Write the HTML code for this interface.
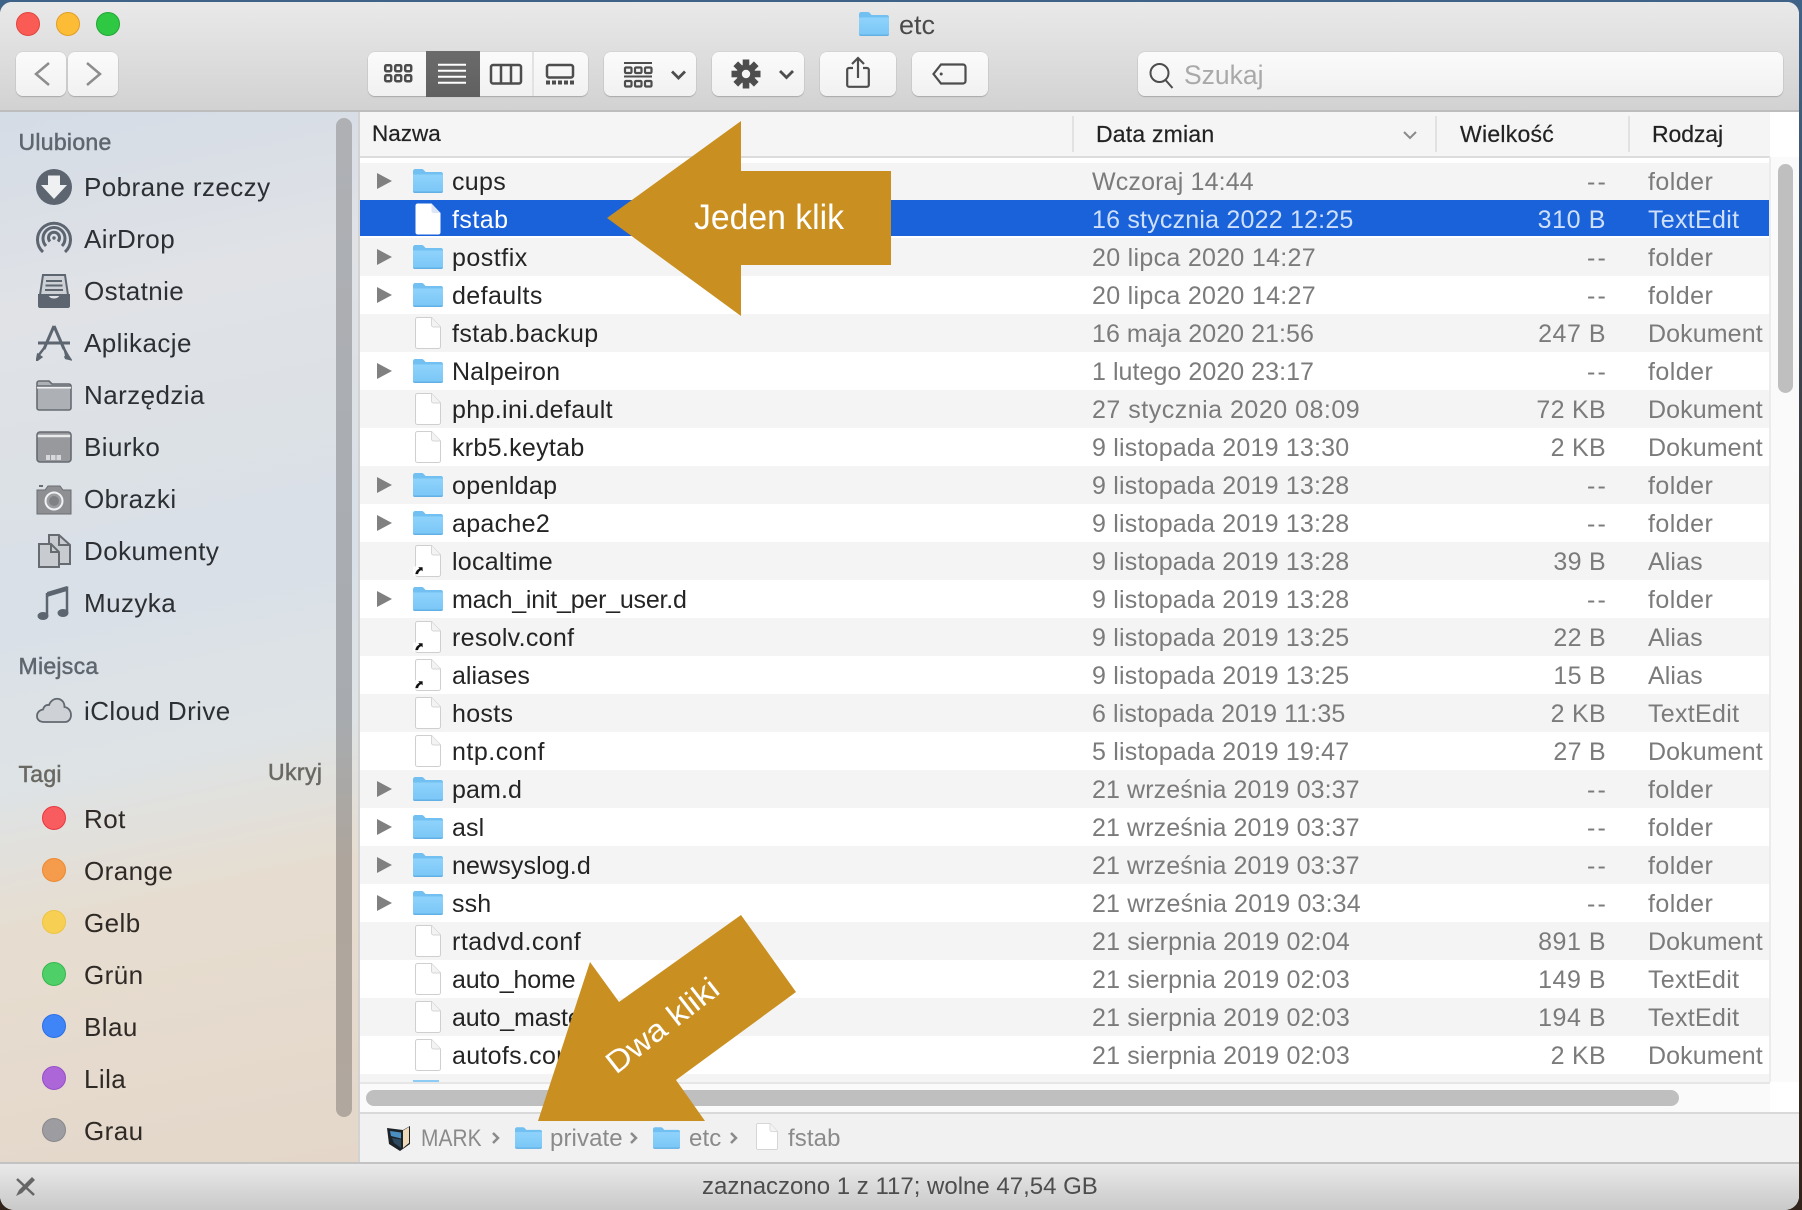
<!DOCTYPE html>
<html lang="pl"><head><meta charset="utf-8"><title>etc</title>
<style>
*{box-sizing:border-box;margin:0;padding:0}
html,body{width:1802px;height:1210px;overflow:hidden}
body{position:relative;background:linear-gradient(#3f6288 0,#3f5d7c 8%,#3a2d25 50%,#33241b 100%);font-family:"Liberation Sans",sans-serif}
.win{position:absolute;left:0;top:2px;width:1799px;height:1208px;border-radius:12px 12px 14px 14px;overflow:hidden;background:#fff}
.abs,.win>*{position:absolute}
.top{position:absolute;left:0;top:0;width:1799px;height:110px;background:linear-gradient(#e9e9e9,#d2d2d2);border-bottom:2px solid #bdbdbd}
.page{position:absolute;left:0;top:0;width:1802px;height:1210px}
.page>*{position:absolute}
.light{width:24px;height:24px;border-radius:50%;top:12px}
.btn{background:linear-gradient(#fbfbfb,#f1f1f1);border-radius:7px;box-shadow:0 1px 1px #a8a8a8,0 0 0 .5px #c9c9c9;height:44px;top:52px}
.side{left:0;top:112px;width:358px;height:1050px;background:linear-gradient(168deg,#d4dce6 0,#e0e2e6 18%,#d9e0e7 45%,#dee3e6 60%,#e6ddd0 73%,#e4d7ca 100%)}
.sbl{left:358px;top:112px;width:2px;height:1050px;background:#d3d3d3}
.sec{font-size:23px;left:18.500px;color:#5f666e;-webkit-text-stroke:.5px #5f666e;letter-spacing:.28px;line-height:28px;white-space:nowrap}
.it{left:84px;font-size:26px;line-height:32px;color:#2c2f33;letter-spacing:.42px;white-space:nowrap}
.it.w{color:#2f2a26}
.ic{left:36px;width:36px;height:36px}
.dot{left:42px;width:24px;height:24px;border-radius:50%;border-width:1.5px;border-style:solid}
.hd{left:360px;top:112px;width:1410px;height:45px;background:#f5f5f5}
.hl{left:360px;top:156px;width:1410px;height:2px;background:#dcdcdc}
.ht{top:120px;font-size:23px;line-height:28px;color:#222;white-space:nowrap;-webkit-text-stroke:.2px #222}
.cd{top:116px;width:2px;height:36px;background:#e2e2e2}
.r{left:360px;width:1409px;height:38px;line-height:37px;font-size:25px;white-space:nowrap;overflow:hidden}
.g{background:#f4f4f4}
.r span{position:absolute;top:2px}
.n{left:92px;color:#242424;letter-spacing:.3px}
.d{left:732px;color:#7b7b7b;letter-spacing:.2px}
.d1{letter-spacing:.05px}
.d2{letter-spacing:.5px}
.d3{letter-spacing:.1px}
.s{right:163px;color:#7b7b7b;letter-spacing:.3px}
.s.m{letter-spacing:2.200px;right:161px}
.k{left:1288px;color:#7b7b7b;letter-spacing:.45px}
.k.x{letter-spacing:.1px}
.k.t{letter-spacing:.3px}
.sel{background:#1a62d9;height:36px}
.sel .n{color:#fff}
.sel .d,.sel .s,.sel .k{color:#cfe0fa}
.r svg{position:absolute;overflow:visible}
.tw{left:17px;top:11px;width:15px;height:16px}
.fo{left:53px;top:7px;width:30px;height:24px}
.fi{left:55px;top:3px;width:26px;height:32px}
.pb{font-size:24px;line-height:30px;color:#8a8a8a;top:1124px;white-space:nowrap;letter-spacing:.1px}
</style></head>
<body>
<svg width="0" height="0" style="position:absolute">
<defs>
<linearGradient id="fg" x1="0" y1="0" x2="0" y2="1"><stop offset="0" stop-color="#8fd3fc"/><stop offset="1" stop-color="#79c6f6"/></linearGradient>
<symbol id="folder" viewBox="0 0 30 24"><path d="M0 2.2C0 1 1 0 2.2 0h6.6c1 0 1.600.5 2.200 1.200L12.600 3H28c1.100 0 2 .9 2 2v17c0 1.100-.9 2-2 2H2c-1.100 0-2-.9-2-2z" fill="#72c0f2"/><path d="M0 5.500h30v16.500c0 1.100-.9 2-2 2H2c-1.100 0-2-.9-2-2z" fill="url(#fg)"/><path d="M0 22.500h30c0 .9-.9 1.500-2 1.500H2c-1.100 0-2-.6-2-1.500z" fill="#62b0e4"/></symbol>
<symbol id="file" viewBox="0 0 26 32"><path d="M2.500.5h14L25.500 10v19.500c0 1.100-.9 2-2 2h-21c-1.100 0-2-.9-2-2v-27c0-1.100.9-2 2-2z" fill="#fff" stroke="#cfcfcf"/><path d="M16.500.5V8c0 1.100.9 2 2 2h7" fill="#f3f3f3" stroke="#d6d6d6"/></symbol>
<symbol id="filew" viewBox="0 0 26 32"><path d="M2.500.5h14L25.500 10v19.500c0 1.100-.9 2-2 2h-21c-1.100 0-2-.9-2-2v-27c0-1.100.9-2 2-2z" fill="#fff"/><path d="M16.500.5V8c0 1.100.9 2 2 2h7z" fill="#dce6f6"/></symbol>
<symbol id="tri" viewBox="0 0 15 16"><path d="M0 0L15 8L0 16z" fill="#808080"/></symbol>
<symbol id="alias" viewBox="0 0 12 12"><path d="M0 2h12v10H0z" fill="#fff" opacity=".85"/><path d="M2.500 10.500C3 7.500 4.500 5.500 7 4.500L5.800 3H10.500V7.500L9 6.200C7 7 6 8.500 5.500 10.500z" fill="#111"/></symbol>
</defs>
</svg>

<div class="win">
<div class="top"></div>
</div>

<div class="page">
<!-- traffic lights -->
<div class="light" style="left:16px;background:#fb5b55;border:1px solid #e0443e"></div>
<div class="light" style="left:56px;background:#fdbc35;border:1px solid #e09e25"></div>
<div class="light" style="left:96px;background:#2ec843;border:1px solid #22a636"></div>

<!-- title -->
<svg style="left:859px;top:12px" width="30" height="24"><use href="#folder"/></svg>
<div style="left:899px;top:9px;font-size:27px;line-height:32px;color:#4a4a4a">etc</div>

<!-- nav -->
<div class="btn" style="left:16px;width:50px"></div>
<div class="btn" style="left:68px;width:50px"></div>
<svg style="left:16px;top:52px" width="102" height="44" fill="none" stroke="#8d8d8d" stroke-width="2.500"><path d="M33 11L20 22L33 33"/><path d="M71 11L84 22L71 33"/></svg>

<!-- view segment -->
<div class="btn" style="left:368px;width:220px"></div>
<div style="left:426px;top:51px;width:54px;height:46px;background:linear-gradient(#6b6b6b,#606060)"></div>
<div style="left:532px;top:52px;width:2px;height:44px;background:#e2e2e2"></div>
<svg style="left:380px;top:60px" width="200" height="30">
<g fill="none" stroke="#4d4d4d" stroke-width="2.500">
<rect x="5.200" y="5.200" width="6" height="6" rx="1.300"/><rect x="15.200" y="5.200" width="6" height="6" rx="1.300"/><rect x="25.200" y="5.200" width="6" height="6" rx="1.300"/>
<rect x="5.200" y="15.200" width="6" height="6" rx="1.300"/><rect x="15.200" y="15.200" width="6" height="6" rx="1.300"/><rect x="25.200" y="15.200" width="6" height="6" rx="1.300"/>
<rect x="111" y="5" width="30" height="18.500" rx="2"/><path d="M121 5v18.500M131 5v18.500"/>
<rect x="167" y="5" width="26" height="12.500" rx="2"/>
</g>
<path d="M58 4.800h28M58 10.800h28M58 16.800h28M58 22.800h28" stroke="#fff" stroke-width="2"/>
<g fill="#4d4d4d"><rect x="166" y="20.500" width="4" height="4"/><rect x="172" y="20.500" width="4" height="4"/><rect x="178" y="20.500" width="4" height="4"/><rect x="184" y="20.500" width="4" height="4"/><rect x="190" y="20.500" width="4" height="4"/></g>
</svg>

<!-- group -->
<div class="btn" style="left:604px;width:92px"></div>
<svg style="left:620px;top:60px" width="72" height="30">
<path d="M4 3h28M4 16.500h28" stroke="#4d4d4d" stroke-width="2"/>
<g fill="none" stroke="#4d4d4d" stroke-width="2.200">
<rect x="5" y="7.500" width="6.500" height="5.500" rx="1"/><rect x="15" y="7.500" width="6.500" height="5.500" rx="1"/><rect x="25" y="7.500" width="6.500" height="5.500" rx="1"/>
<rect x="5" y="21" width="6.500" height="5.500" rx="1"/><rect x="15" y="21" width="6.500" height="5.500" rx="1"/><rect x="25" y="21" width="6.500" height="5.500" rx="1"/>
<path d="M52 11.500l6.500 6.500L65 11.500" stroke-width="2.800"/>
</g></svg>

<!-- gear -->
<div class="btn" style="left:712px;width:92px"></div>
<svg style="left:728px;top:56px" width="72" height="36">
<g transform="translate(18 18)" fill="#4d4d4d">
<circle r="9.500"/>
<g><rect x="-3.300" y="-14.500" width="6.600" height="6"/><rect x="-3.300" y="8.500" width="6.600" height="6"/><rect x="-14.500" y="-3.300" width="6" height="6.600"/><rect x="8.500" y="-3.300" width="6" height="6.600"/></g>
<g transform="rotate(45)"><rect x="-3.300" y="-14.500" width="6.600" height="6"/><rect x="-3.300" y="8.500" width="6.600" height="6"/><rect x="-14.500" y="-3.300" width="6" height="6.600"/><rect x="8.500" y="-3.300" width="6" height="6.600"/></g>
<circle r="4.200" fill="#f6f6f6"/>
</g>
<path d="M52 15l6.500 6.500L65 15" fill="none" stroke="#4d4d4d" stroke-width="2.800"/>
</svg>

<!-- share -->
<div class="btn" style="left:820px;width:76px"></div>
<svg style="left:840px;top:54px" width="36" height="36" fill="none" stroke="#4d4d4d" stroke-width="2.200">
<path d="M13 14H9c-1 0-1.800.8-1.800 1.800V31c0 1 .8 1.800 1.800 1.800h18c1 0 1.800-.8 1.800-1.800V15.800c0-1-.8-1.800-1.800-1.800h-4"/>
<path d="M18 24V4M12 10l6-6 6 6"/>
</svg>

<!-- tag -->
<div class="btn" style="left:912px;width:76px"></div>
<svg style="left:930px;top:60px" width="40" height="28" fill="none" stroke="#4d4d4d" stroke-width="2.200">
<path d="M11 4.500h22c1.400 0 2.500 1.100 2.500 2.500v14c0 1.400-1.100 2.500-2.500 2.500H11L3.500 14z"/>
<circle cx="11.200" cy="14" r="1.500" fill="#4d4d4d" stroke="none"/>
</svg>

<!-- search -->
<div class="btn" style="left:1138px;width:645px"></div>
<svg style="left:1148px;top:60px" width="28" height="30" fill="none" stroke="#4d4d4d" stroke-width="2"><circle cx="11.500" cy="13" r="9"/><path d="M17.500 20l7 8"/></svg>
<div style="left:1184px;top:59px;font-size:26.500px;line-height:32px;color:#a9a9a9">Szukaj</div>

<!-- sidebar -->
<div class="side"></div>
<div class="sbl"></div>
<div style="left:336px;top:118px;width:16px;height:999px;border-radius:8px;background:linear-gradient(#aeb0b4,#a7abaf 60%,#aea59c 75%,#b0a79e)"></div>

<div class="sec" style="top:128px">Ulubione</div>
<svg class="ic" style="top:169px" viewBox="0 0 36 36"><circle cx="18" cy="18" r="18" fill="#5c6570"/><path d="M12 6.500h12V16h7L18 30 5 16h7z" fill="#eef0f2"/></svg>
<div class="it" style="top:171px">Pobrane rzeczy</div>
<svg class="ic" style="top:221px" viewBox="0 0 36 36" fill="none" stroke="#5c6570" stroke-width="3"><path d="M7 31A16.500 16.500 0 1 1 29 31"/><path d="M10 25A11 11 0 1 1 26 25"/><path d="M14 20.500A5.500 5.500 0 1 1 22 20.500"/><circle cx="18" cy="17" r="1.700" fill="#5c6570" stroke="none"/></svg>
<div class="it" style="top:223px">AirDrop</div>
<svg class="ic" style="top:273px" viewBox="0 0 36 36"><path d="M7 2h22l3 20H4z" fill="#cdd1d6" stroke="#5c6570" stroke-width="2"/><path d="M10 8h16M9.500 12.500h17M9 17h18" stroke="#5c6570" stroke-width="2"/><path d="M2 21h10c.5 3 3 4.500 6 4.500s5.500-1.500 6-4.500h10v12c0 1-.8 2-2 2H4c-1.200 0-2-1-2-2z" fill="#5c6570"/></svg>
<div class="it" style="top:275px">Ostatnie</div>
<svg class="ic" style="top:325px" viewBox="0 0 36 36"><path d="M18 1L8 24" fill="none" stroke="#5c6570" stroke-width="3"/><path d="M18 1L28 24" fill="none" stroke="#5c6570" stroke-width="3"/><path d="M9 22L2 31M1 35l1-5 3 2zM27 22l5 9 2 3-4-1-1-2" fill="#5c6570" stroke="#5c6570" stroke-width="2.500"/><path d="M2 18h32" stroke="#5c6570" stroke-width="3"/></svg>
<div class="it" style="top:327px">Aplikacje</div>
<svg class="ic" style="top:377px" viewBox="0 0 36 36"><path d="M1 6c0-1 .8-2 2-2h10l3 3h17c1.200 0 2 1 2 2v22c0 1-.8 2-2 2H3c-1.200 0-2-1-2-2z" fill="#adb1b6" stroke="#666b72" stroke-width="1.600"/><path d="M1 10.500h34" stroke="#eef0f2" stroke-width="2"/><path d="M1 9h34" stroke="#666b72" stroke-width="1.400"/></svg>
<div class="it" style="top:379px">Narzędzia</div>
<svg class="ic" style="top:429px" viewBox="0 0 36 36"><rect x="1" y="3" width="34" height="30" rx="3" fill="#97999d" stroke="#666b72" stroke-width="1.600"/><path d="M1.800 7h32.400" stroke="#e8eaec" stroke-width="2.500"/><path d="M10 26h15v5H10z" fill="#d6d8db"/><path d="M14.500 26v5M20 26v5" stroke="#97999d"/></svg>
<div class="it" style="top:431px">Biurko</div>
<svg class="ic" style="top:481px" viewBox="0 0 36 36"><path d="M1 9h8l3-4h12l3 4h8v24H1z" fill="#8d8f93" stroke="#6a6d72"/><circle cx="18" cy="20" r="8.500" fill="#9b9da1" stroke="#f0f1f2" stroke-width="2"/><circle cx="18" cy="20" r="5" fill="#7f8185"/><path d="M3 5h4" stroke="#6a6d72" stroke-width="2"/></svg>
<div class="it" style="top:483px">Obrazki</div>
<svg class="ic" style="top:533px" viewBox="0 0 36 36" fill="#c8ccd1" stroke="#666b72" stroke-width="2"><path d="M13 2h10l11 10v19H22V19L13 10z"/><path d="M3 11h12l8 8v15H3z"/><path d="M23 2v10h11M15 11v8h8" fill="none"/></svg>
<div class="it" style="top:535px">Dokumenty</div>
<svg class="ic" style="top:585px" viewBox="0 0 36 36"><path d="M11 10L31 3v25" fill="none" stroke="#5c6570" stroke-width="2.500"/><path d="M11 7L31 1v5L11 12z" fill="#5c6570"/><path d="M11 8v23" stroke="#5c6570" stroke-width="2.500"/><ellipse cx="7" cy="31" rx="5.500" ry="4" fill="#5c6570"/><ellipse cx="27" cy="28" rx="5.500" ry="4" fill="#5c6570"/></svg>
<div class="it" style="top:587px">Muzyka</div>

<div class="sec" style="top:652px">Miejsca</div>
<svg class="ic" style="top:690px" viewBox="0 0 36 36"><path d="M8 32C3.500 32 1 29.500 1 26c0-3.500 2.500-6 6-6.500C8 16 10 14.500 13 15c2-5 6-7 10-6 3.500 1 5.500 4 5.500 8C32 17.500 35 20.500 35 25c0 4-2.500 7-6 7z" fill="#ced2d6" stroke="#62686f" stroke-width="1.800"/></svg>
<div class="it" style="top:695px">iCloud Drive</div>

<div class="sec" style="top:760px;color:#6a6862;-webkit-text-stroke-color:#6a6862">Tagi</div>
<div class="sec" style="top:758px;left:268px;letter-spacing:.4px;color:#6a6862;-webkit-text-stroke-color:#6a6862">Ukryj</div>

<div class="dot" style="top:806px;background:#f95c5f;border-color:#e6383e"></div><div class="it w" style="top:803px">Rot</div>
<div class="dot" style="top:858px;background:#f59b4c;border-color:#ec8a30"></div><div class="it w" style="top:855px">Orange</div>
<div class="dot" style="top:910px;background:#f7d053;border-color:#eec340"></div><div class="it w" style="top:907px">Gelb</div>
<div class="dot" style="top:962px;background:#4fcf67;border-color:#33b84e"></div><div class="it w" style="top:959px">Grün</div>
<div class="dot" style="top:1014px;background:#3f85f8;border-color:#2a6fe6"></div><div class="it w" style="top:1011px">Blau</div>
<div class="dot" style="top:1066px;background:#ac66d8;border-color:#9650c8"></div><div class="it w" style="top:1063px">Lila</div>
<div class="dot" style="top:1118px;background:#9c9ca1;border-color:#87878c"></div><div class="it w" style="top:1115px">Grau</div>

<!-- list header -->
<div class="hd"></div><div class="hl"></div>
<div class="ht" style="left:372px;font-size:22.500px">Nazwa</div>
<div class="cd" style="left:1072px"></div>
<div class="ht" style="left:1096px;letter-spacing:.2px">Data zmian</div>
<svg style="left:1403px;top:131px" width="14" height="9" fill="none" stroke="#8a8a8a" stroke-width="2"><path d="M1 1l6 6 6-6"/></svg>
<div class="cd" style="left:1435px"></div>
<div class="ht" style="left:1460px;letter-spacing:.25px">Wielkość</div>
<div class="cd" style="left:1628px"></div>
<div class="ht" style="left:1652px;letter-spacing:-.1px">Rodzaj</div>

<!-- rows -->
<div class="r g" style="top:163px;height:37px"><svg class="tw" style="top:10px"><use href="#tri"/></svg><svg class="fo" style="top:6px"><use href="#folder"/></svg><span class="n" style="top:1px">cups</span><span class="d" style="top:1px;letter-spacing:.16px">Wczoraj 14:44</span><span class="s m" style="top:1px">--</span><span class="k" style="top:1px">folder</span></div>
<div class="r sel" style="top:200px"><svg class="fi"><use href="#filew"/></svg><span class="n" style="letter-spacing:.45px">fstab</span><span class="d">16 stycznia 2022 12:25</span><span class="s" style="letter-spacing:.6px">310 B</span><span class="k t">TextEdit</span></div>
<div class="r g" style="top:238px"><svg class="tw"><use href="#tri"/></svg><svg class="fo"><use href="#folder"/></svg><span class="n" style="letter-spacing:.5px">postfix</span><span class="d" style="letter-spacing:.3px">20 lipca 2020 14:27</span><span class="s m">--</span><span class="k">folder</span></div>
<div class="r" style="top:276px"><svg class="tw"><use href="#tri"/></svg><svg class="fo"><use href="#folder"/></svg><span class="n" style="letter-spacing:.4px">defaults</span><span class="d" style="letter-spacing:.3px">20 lipca 2020 14:27</span><span class="s m">--</span><span class="k">folder</span></div>
<div class="r g" style="top:314px"><svg class="fi"><use href="#file"/></svg><span class="n" style="letter-spacing:.4px">fstab.backup</span><span class="d d1">16 maja 2020 21:56</span><span class="s" style="letter-spacing:.5px">247 B</span><span class="k x">Dokument</span></div>
<div class="r" style="top:352px"><svg class="tw"><use href="#tri"/></svg><svg class="fo"><use href="#folder"/></svg><span class="n" style="letter-spacing:.12px">Nalpeiron</span><span class="d d1">1 lutego 2020 23:17</span><span class="s m">--</span><span class="k">folder</span></div>
<div class="r g" style="top:390px"><svg class="fi"><use href="#file"/></svg><span class="n" style="letter-spacing:.35px">php.ini.default</span><span class="d d2">27 stycznia 2020 08:09</span><span class="s">72 KB</span><span class="k x">Dokument</span></div>
<div class="r" style="top:428px"><svg class="fi"><use href="#file"/></svg><span class="n">krb5.keytab</span><span class="d">9 listopada 2019 13:30</span><span class="s">2 KB</span><span class="k x">Dokument</span></div>
<div class="r g" style="top:466px"><svg class="tw"><use href="#tri"/></svg><svg class="fo"><use href="#folder"/></svg><span class="n">openldap</span><span class="d">9 listopada 2019 13:28</span><span class="s m">--</span><span class="k">folder</span></div>
<div class="r" style="top:504px"><svg class="tw"><use href="#tri"/></svg><svg class="fo"><use href="#folder"/></svg><span class="n">apache2</span><span class="d">9 listopada 2019 13:28</span><span class="s m">--</span><span class="k">folder</span></div>
<div class="r g" style="top:542px"><svg class="fi"><use href="#file"/></svg><svg style="left:53px;top:22px;width:11px;height:12px"><use href="#alias"/></svg><span class="n" style="letter-spacing:.25px">localtime</span><span class="d">9 listopada 2019 13:28</span><span class="s">39 B</span><span class="k x">Alias</span></div>
<div class="r" style="top:580px"><svg class="tw"><use href="#tri"/></svg><svg class="fo"><use href="#folder"/></svg><span class="n" style="letter-spacing:-.22px">mach_init_per_user.d</span><span class="d">9 listopada 2019 13:28</span><span class="s m">--</span><span class="k">folder</span></div>
<div class="r g" style="top:618px"><svg class="fi"><use href="#file"/></svg><svg style="left:53px;top:22px;width:11px;height:12px"><use href="#alias"/></svg><span class="n">resolv.conf</span><span class="d">9 listopada 2019 13:25</span><span class="s">22 B</span><span class="k x">Alias</span></div>
<div class="r" style="top:656px"><svg class="fi"><use href="#file"/></svg><svg style="left:53px;top:22px;width:11px;height:12px"><use href="#alias"/></svg><span class="n" style="letter-spacing:0">aliases</span><span class="d">9 listopada 2019 13:25</span><span class="s">15 B</span><span class="k x">Alias</span></div>
<div class="r g" style="top:694px"><svg class="fi"><use href="#file"/></svg><span class="n">hosts</span><span class="d d3">6 listopada 2019 11:35</span><span class="s">2 KB</span><span class="k t">TextEdit</span></div>
<div class="r" style="top:732px"><svg class="fi"><use href="#file"/></svg><span class="n" style="letter-spacing:.5px">ntp.conf</span><span class="d">5 listopada 2019 19:47</span><span class="s">27 B</span><span class="k x">Dokument</span></div>
<div class="r g" style="top:770px"><svg class="tw"><use href="#tri"/></svg><svg class="fo"><use href="#folder"/></svg><span class="n" style="letter-spacing:.12px">pam.d</span><span class="d d3">21 września 2019 03:37</span><span class="s m">--</span><span class="k">folder</span></div>
<div class="r" style="top:808px"><svg class="tw"><use href="#tri"/></svg><svg class="fo"><use href="#folder"/></svg><span class="n" style="letter-spacing:.12px">asl</span><span class="d d3">21 września 2019 03:37</span><span class="s m">--</span><span class="k">folder</span></div>
<div class="r g" style="top:846px"><svg class="tw"><use href="#tri"/></svg><svg class="fo"><use href="#folder"/></svg><span class="n" style="letter-spacing:.12px">newsyslog.d</span><span class="d d3">21 września 2019 03:37</span><span class="s m">--</span><span class="k">folder</span></div>
<div class="r" style="top:884px"><svg class="tw"><use href="#tri"/></svg><svg class="fo"><use href="#folder"/></svg><span class="n" style="letter-spacing:.12px">ssh</span><span class="d" style="letter-spacing:.15px">21 września 2019 03:34</span><span class="s m">--</span><span class="k">folder</span></div>
<div class="r g" style="top:922px"><svg class="fi"><use href="#file"/></svg><span class="n" style="letter-spacing:.5px">rtadvd.conf</span><span class="d" style="letter-spacing:.16px">21 sierpnia 2019 02:04</span><span class="s" style="letter-spacing:.5px">891 B</span><span class="k x">Dokument</span></div>
<div class="r" style="top:960px"><svg class="fi"><use href="#file"/></svg><span class="n" style="letter-spacing:-.2px">auto_home</span><span class="d" style="letter-spacing:.16px">21 sierpnia 2019 02:03</span><span class="s" style="letter-spacing:.5px">149 B</span><span class="k t">TextEdit</span></div>
<div class="r g" style="top:998px"><svg class="fi"><use href="#file"/></svg><span class="n" style="letter-spacing:-.1px">auto_master</span><span class="d" style="letter-spacing:.16px">21 sierpnia 2019 02:03</span><span class="s" style="letter-spacing:.5px">194 B</span><span class="k t">TextEdit</span></div>
<div class="r" style="top:1036px"><svg class="fi"><use href="#file"/></svg><span class="n">autofs.conf</span><span class="d" style="letter-spacing:.16px">21 sierpnia 2019 02:03</span><span class="s">2 KB</span><span class="k x">Dokument</span></div>
<div class="g" style="left:360px;top:1074px;width:1409px;height:8px"></div>
<div style="left:413px;top:1080px;width:26px;height:2px;background:#8dcdf5"></div>

<!-- vertical scroll -->
<div style="left:1769px;top:157px;width:2px;height:925px;background:#ececec"></div>
<div style="left:1771px;top:157px;width:28px;height:925px;background:#fafafa"></div>
<div style="left:1778px;top:164px;width:15px;height:229px;border-radius:8px;background:#bfbfbf"></div>

<!-- horizontal scroll -->
<div style="left:360px;top:1082px;width:1410px;height:30px;background:#fafafa;border-top:2px solid #e6e6e6"></div>
<div style="left:366px;top:1090px;width:1313px;height:16px;border-radius:8px;background:#bfbfbf"></div>

<!-- path bar -->
<div style="left:360px;top:1112px;width:1439px;height:50px;background:#f1f1f1;border-top:2px solid #d9d9d9"></div>
<svg style="left:387px;top:1125px" width="23" height="26" viewBox="0 0 23 26"><path d="M0 3l16 2 7-4v18l-10 7L2 19z" fill="#1d2226"/><path d="M3 6l11 1.500v6L4 11z" fill="#4a8fc2"/><path d="M5 13l9 1.500V23L7 18z" fill="#2d4a60"/><path d="M16 5.500l6-3.500v16l-6 5z" fill="#efd9bb"/></svg>
<div class="pb" style="left:421px;transform:scaleX(.87);transform-origin:0 50%">MARK</div>
<svg style="left:491px;top:1131px" width="10" height="14" fill="none" stroke="#8a8a8a" stroke-width="2.500"><path d="M2 2l5 5-5 5"/></svg>
<svg style="left:515px;top:1127px" width="27" height="22"><use href="#folder"/></svg>
<div class="pb" style="left:550px">private</div>
<svg style="left:629px;top:1131px" width="10" height="14" fill="none" stroke="#8a8a8a" stroke-width="2.500"><path d="M2 2l5 5-5 5"/></svg>
<svg style="left:653px;top:1127px" width="27" height="22"><use href="#folder"/></svg>
<div class="pb" style="left:689px">etc</div>
<svg style="left:729px;top:1131px" width="10" height="14" fill="none" stroke="#8a8a8a" stroke-width="2.500"><path d="M2 2l5 5-5 5"/></svg>
<svg style="left:756px;top:1123px" width="22" height="27"><use href="#file"/></svg>
<div class="pb" style="left:788px">fstab</div>

<!-- status bar -->
<div style="left:0;top:1162px;width:1799px;height:48px;background:linear-gradient(#e9e9e9,#c9c9c9);border-top:2px solid #c3c3c3;border-radius:0 0 14px 14px"></div>
<svg style="left:13px;top:1175px" width="24" height="24" viewBox="0 0 24 24"><path d="M4 4l17 16" stroke="#666" stroke-width="2.500"/><path d="M19 2l3 3L9 18l-6 3 3-6z" fill="#666"/></svg>
<div style="left:702px;top:1172px;font-size:24px;line-height:30px;color:#4d4d4d;letter-spacing:0;white-space:nowrap">zaznaczono 1 z 117; wolne 47,54 GB</div>

<!-- arrows -->
<svg style="left:0;top:0" width="1802" height="1210">
<polygon points="607,218 741,121 741,171 891,171 891,265 741,265 741,316" fill="#c98f20" />
<text x="694" y="229" font-family="Liberation Sans, sans-serif" font-size="35" fill="#fff" textLength="150" lengthAdjust="spacingAndGlyphs">Jeden klik</text>
<polygon points="590,962 619,1002 741,915 796,992 676,1080 705,1121 538,1121" fill="#c98f20"/>
<text transform="translate(616 1075) rotate(-38)" font-family="Liberation Sans, sans-serif" font-size="31" fill="#fff" textLength="134" lengthAdjust="spacingAndGlyphs">Dwa kliki</text>
</svg>
</div>
</body></html>
